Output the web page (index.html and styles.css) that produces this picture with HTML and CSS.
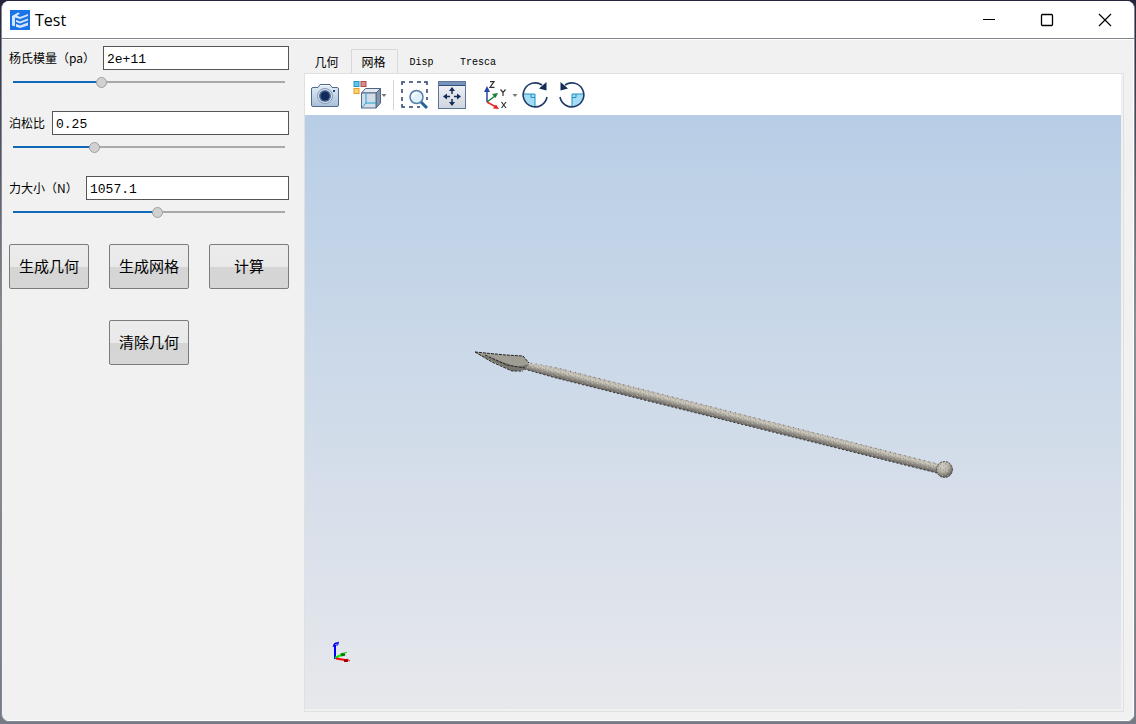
FILE: index.html
```html
<!DOCTYPE html>
<html lang="zh-CN">
<head>
<meta charset="utf-8">
<title>Test</title>
<link rel="stylesheet" href="styles.css">
</head>
<body>
<div class="window">
  <header class="titlebar">
    <svg class="app-icon" viewBox="0 0 20 20"><rect width="20" height="20" fill="#1a73e8"/><path d="M2 6l6-3.500 2 1-3 2 3 1.500 8-3v2l-8 3-5-1.500v2l5 2 8-3v2l-8 3-5-2v2l5 2 8-3v3l-8 2.500-8-2.500z" fill="#d5e5fb"/><path d="M5.500 8v9" stroke="#1a73e8"/></svg>
    <h1 class="title">Test</h1>
    <div class="window-controls">
      <button class="window-button" aria-label="最小化"><svg viewBox="0 0 14 14"><path d="M1 6.500h12" stroke="#000"/></svg></button>
      <button class="window-button" aria-label="最大化"><svg viewBox="0 0 14 14"><rect x="1.500" y="1.500" width="11" height="11" rx="1" fill="none" stroke="#000" stroke-width="1.300"/></svg></button>
      <button class="window-button" aria-label="关闭"><svg viewBox="0 0 14 14"><path d="M1 1l12 12M13 1L1 13" stroke="#000" stroke-width="1.200"/></svg></button>
    </div>
  </header>
  <main class="content">
    <form class="params">
      <div class="param">
        <div class="field"><label class="field-label label-modulus" for="modulus">杨氏模量（pa）</label><input class="field-input" id="modulus" type="text" value="2e+11"></div>
        <input class="slider" type="range" aria-label="杨氏模量" min="0" max="1000" value="318" style="--fill:32%">
      </div>
      <div class="param">
        <div class="field"><label class="field-label label-ratio" for="ratio">泊松比</label><input class="field-input" id="ratio" type="text" value="0.25"></div>
        <input class="slider" type="range" aria-label="泊松比" min="0" max="1000" value="291" style="--fill:30%">
      </div>
      <div class="param">
        <div class="field"><label class="field-label label-force" for="force">力大小（N）</label><input class="field-input" id="force" type="text" value="1057.1"></div>
        <input class="slider" type="range" aria-label="力大小" min="0" max="1000" value="533" style="--fill:53%">
      </div>
      <div class="actions">
        <button class="action" type="button">生成几何</button>
        <button class="action" type="button">生成网格</button>
        <button class="action" type="button">计算</button>
        <button class="action action-clear" type="button">清除几何</button>
      </div>
    </form>
    <section class="viewer">
      <div class="tabs" role="tablist">
        <button class="tab" role="tab">几何</button>
        <button class="tab tab-active" role="tab" aria-selected="true">网格</button>
        <button class="tab tab-latin" role="tab">Disp</button>
        <button class="tab tab-latin tab-tresca" role="tab">Tresca</button>
      </div>
      <div class="panel">
        <div class="toolbar">
          <button class="tool tool-camera" aria-label="截图"><svg class="icon" viewBox="0 0 28 28"><defs><linearGradient id="steel" x2="0" y2="1"><stop stop-color="#e4eef8"/><stop offset="1" stop-color="#a9bfd8"/></linearGradient></defs><path d="M2 6.500Q.5 6.500.5 8v16q0 1.500 1.500 1.500h24q1.500 0 1.500-1.500V8q0-1.500-1.500-1.500h-5l-2-3H9l-2 3z" fill="url(#steel)" stroke="#50698f"/><path d="M9.500 4.500h9" stroke="#f4f9fd"/><circle cx="14" cy="15" r="7.500" fill="#dbe6f2" stroke="#8299b5"/><circle cx="14" cy="15" r="6" fill="#557098"/><circle cx="14" cy="15" r="4.500" fill="#132b59"/><rect x="22" y="9" width="2" height="2" fill="#274a7c"/></svg></button>
          <button class="tool tool-view" aria-label="视图"><svg class="icon" viewBox="0 0 28 28"><rect x="1" y=".5" width="5" height="5" fill="#5fc4ee" stroke="#2495c7"/><rect x="8" y=".5" width="5" height="5" fill="#d98d8d" stroke="#a84c50"/><rect x="1" y="7.500" width="5" height="5" fill="#ffd36b" stroke="#e49c2c"/><path d="M8.500 12l4-4.500h15L23 12z" fill="#e3e9f0" stroke="#4d637e"/><path d="M23 12l4.500-4.500V22L23 27z" fill="#8396ad" stroke="#4d637e"/><rect x="8.500" y="12" width="14.500" height="15" fill="#d3dde9" stroke="#536b88"/><path d="M13 12v10h10M13 22l-4 4.500" fill="none" stroke="#1da3d4"/></svg><svg class="arrow" viewBox="0 0 6 6"><path d="M.5 2h5L3 5z" fill="#777"/></svg></button>
          <span class="separator"></span>
          <button class="tool tool-zoom" aria-label="框选缩放"><svg class="icon" viewBox="0 0 28 28"><path d="M1 4V1h3M8 1h4M16 1h4M23 1h3v3M26 8v4M26 16v3M1 8v4M1 16v4M1 23v3h3M8 26h4M16 26h3" fill="none" stroke="#2a3f68" stroke-width="1.500"/><path d="M20 21l6 6" stroke="#1e659f" stroke-width="3"/><circle cx="15.500" cy="16" r="6.500" fill="#dff1fb" stroke="#557da8" stroke-width="1.500"/><path d="M12 16q0-4 4-4" fill="none" stroke="#fff" stroke-width="1.500"/></svg></button>
          <button class="tool tool-fit" aria-label="适应窗口"><svg class="icon" viewBox="0 0 28 28"><rect x=".5" y=".5" width="27" height="27" fill="url(#fitface)" stroke="#5d7697"/><defs><linearGradient id="fitface" x2="0" y2="1"><stop stop-color="#f2f4f7"/><stop offset="1" stop-color="#cfd5df"/></linearGradient></defs><path d="M1 1h26v3H1z" fill="#7693bc"/><path d="M1 4.500h26" stroke="#324f7c"/><path d="M14 8v5M14 18v5M7 15.500h5M16 15.500h5" stroke="#142c58" stroke-width="1.500"/><path d="M14 6l3 4h-6zM14 25l3-4h-6zM5 15.500l4-3v6zM23 15.500l-4-3v6z" fill="#142c58"/></svg></button>
          <button class="tool tool-axes" aria-label="坐标轴方向"><svg class="icon" viewBox="0 0 28 28"><path d="M3 21V9" stroke="#2447a8" stroke-width="1.500"/><path d="M3 5l3 6H0z" fill="#2447a8"/><path d="M3 21l8-6" stroke="#168039" stroke-width="1.500"/><path d="M14 12l-2.500 5-3.500-4z" fill="#168039"/><path d="M3 21l9 5" stroke="#e62626" stroke-width="1.500"/><path d="M15 28l-6-.5 3-4z" fill="#e62626"/><path d="M6 .7h4L6 6.300h4.500M16.500 8.500l2.500 3 2.500-3M19 11.500v3.500M17.500 21l4.500 6M22 21l-4.500 6" fill="none" stroke="#333" stroke-width="1.200"/></svg><svg class="arrow" viewBox="0 0 6 6"><path d="M.5 2h5L3 5z" fill="#777"/></svg></button>
          <button class="tool tool-cw" aria-label="顺时针旋转"><svg class="icon" viewBox="0 0 28 28"><path d="M2 13h12v12.500A12 12 0 0 1 2 13z" fill="#a4dcf5"/><path d="M2 13h12v12M10 13v3.500h4" fill="none" stroke="#1c91c6"/><path d="M21 4A12 12 0 1 0 26 16" fill="none" stroke="#213b68" stroke-width="1.600"/><path d="M25.500 1v8.500l-7.500-2z" fill="#142c58"/></svg></button>
          <button class="tool tool-ccw" aria-label="逆时针旋转"><svg class="icon" viewBox="0 0 28 28"><path d="M26 13H14v12.500A12 12 0 0 0 26 13z" fill="#a4dcf5"/><path d="M26 13H14v12M18 13v3.500h-4" fill="none" stroke="#1c91c6"/><path d="M7 4A12 12 0 1 1 2 16" fill="none" stroke="#213b68" stroke-width="1.600"/><path d="M2.500 1v8.500l7.500-2z" fill="#142c58"/></svg></button>
        </div>
        <div class="viewport">
          <svg class="scene" viewBox="0 0 816 594" preserveAspectRatio="xMidYMid meet">
            <defs>
              <linearGradient id="shaft" gradientUnits="userSpaceOnUse" x1="431" y1="297" x2="428.500" y2="307"><stop stop-color="#b7b3aa"/><stop offset=".35" stop-color="#cbc7bc"/><stop offset=".65" stop-color="#9a968e"/><stop offset="1" stop-color="#65625e"/></linearGradient>
              <radialGradient id="ball" cx=".4" cy=".3" r=".7"><stop stop-color="#d5d1c6"/><stop offset=".55" stop-color="#b1ada3"/><stop offset="1" stop-color="#5f5d59"/></radialGradient>
              <pattern id="mesh" width="5" height="4" patternUnits="userSpaceOnUse"><path d="M0 1h1M3 3h1" stroke="#7c7972" stroke-width=".6"/><path d="M2 0h1" stroke="#dedace" stroke-width=".8"/></pattern>
            </defs>
            <path d="M219 247l34 6 381 96-2 9-381-95-32-9z" fill="url(#shaft)"/>
            <path d="M219 247l34 6 381 96-2 9-381-95-32-9z" fill="url(#mesh)"/>
            <path d="M221 247l32 6 380 96" fill="none" stroke="#55534f" stroke-width=".8" stroke-dasharray="1 4"/>
            <path d="M219 254l32 9 381 95" fill="none" stroke="#383734" stroke-dasharray="2 2"/>
            <path d="M170 237l31 3 17 1 6 7-5 7-12 1-20-9z" fill="#a09d95"/>
            <path d="M171 238l41 14 12-3-4 6-12 1z" fill="#77756f"/>
            <path d="M170 237l31 3 17 1 6 7M170 237l17 10 20 9h11M180 240l22 10 18 3" fill="none" stroke="#252523" stroke-dasharray="3 1"/>
            <circle cx="639.500" cy="354.500" r="8" fill="url(#ball)"/><circle cx="639.500" cy="354.500" r="8" fill="url(#mesh)" stroke="#4a4946" stroke-dasharray="2 1"/>
            <path d="M30 544v-14" stroke="#00f" stroke-width="2"/><path d="M28 532l2-4 4 1M29 529l5-2M28 530h5" fill="none" stroke="#00e"/>
            <path d="M30 543l8-4" stroke="#00f000" stroke-width="2"/><path d="M36 540l4-1" stroke="#006d00" stroke-width="3"/><path d="M38 539l4-2" stroke="#00e000"/>
            <path d="M31 543.500l12 2" stroke="#f00" stroke-width="2"/><path d="M39 545.500h4" stroke="#900" stroke-width="3"/><path d="M42 544l3 2" stroke="#f00"/>
          </svg>
        </div>
      </div>
    </section>
  </main>
</div>
</body>
</html>
```
FILE: styles.css
```css
* { box-sizing: border-box; }

body {
  margin: 0;
  min-height: 100vh;
  display: flex;
  padding: 1px 1px 2px;
  background: linear-gradient(#24243d, #8c8e94 45%, #747b86);
  color: #000;
  font-family: "Noto Sans CJK SC", sans-serif;
}

button, input { font: inherit; color: inherit; }

.window {
  flex: 1;
  display: flex;
  flex-direction: column;
  border: 1px solid #858a90;
  border-top: 0;
  border-radius: 8px;
  background: #f1f1f1;
  overflow: hidden;
}

.titlebar {
  height: 38px;
  display: flex;
  align-items: center;
  padding-left: 8px;
  background: #fff;
  border-bottom: 1px solid #80858c;
}
.app-icon { width: 20px; height: 20px; }
.title {
  margin: 0 0 0 5px;
  font: 400 16px/20px "Open Sans", "Noto Sans", sans-serif;
}
.window-controls { display: flex; margin-left: auto; }
.window-button {
  width: 58px;
  height: 36px;
  padding: 0;
  border: 0;
  background: none;
}
.window-button svg { width: 14px; height: 14px; display: block; margin: auto; }

.content {
  flex: 1;
  display: flex;
  border: solid #fff;
  border-width: 1px 1px 1px 0;
}

.params {
  width: 302px;
  flex: none;
  padding: 6px 15px 0 7px;
}
.param { height: 65px; }
.field { display: flex; height: 25px; }
.field-label {
  flex: none;
  font-size: 12px;
  line-height: 24px;
  white-space: nowrap;
}
.label-modulus { width: 94px; }
.label-ratio { width: 43px; }
.label-force { width: 77px; }
.field-input {
  flex: 1;
  min-width: 0;
  height: 24px;
  padding: 2px 3px 0;
  border: 1px solid #555;
  border-radius: 0;
  background: #fff;
  font-family: "Liberation Mono", monospace;
  font-size: 13px;
}

.slider {
  appearance: none;
  display: block;
  width: calc(100% - 8px);
  height: 12px;
  margin: 5px 4px 0;
  background: linear-gradient(to right, #0f68b8 var(--fill), #a9a9a9 var(--fill)) center / 100% 2px no-repeat;
}
.slider::-webkit-slider-thumb {
  appearance: none;
  width: 11px;
  height: 11px;
  border: 1px solid #a0a0a0;
  border-radius: 50%;
  background: #d1d1d1;
}

.actions {
  display: grid;
  grid-template-columns: repeat(3, 1fr);
  gap: 31px 20px;
  padding-top: 3px;
}
.action {
  height: 45px;
  padding: 0 0 2px;
  border: 1px solid #7c7c7c;
  border-radius: 2px;
  background: linear-gradient(#ececec, #e9e9e9 50%, #d5d5d5 51%, #d6d6d6) border-box;
  font-size: 15px;
}
.action-clear { grid-column: 2; }

.viewer {
  flex: 1;
  min-width: 0;
  display: flex;
  flex-direction: column;
  padding: 9px 9px 8px 0;
}
.tabs { display: flex; height: 24px; }
.tab {
  width: 47px;
  padding: 0 2px 0 0;
  border: 1px solid transparent;
  border-bottom: 0;
  background: none;
  font-size: 12px;
}
.tab-active { border-color: #d9d9d9; background: #f1f1f1; }
.tab-latin {
  width: 49px;
  padding-top: 2px;
  font-family: "Liberation Mono", monospace;
  font-size: 10px;
}
.tab-tresca { width: 64px; }

.panel {
  flex: 1;
  display: flex;
  flex-direction: column;
  border: 1px solid #e0e0e0;
  padding: 0 2px 2px 0;
}
.toolbar {
  flex: none;
  display: flex;
  align-items: center;
  height: 41px;
  padding-left: 6px;
  background: #fff;
}
.tool {
  display: flex;
  align-items: center;
  padding: 0;
  border: 0;
  background: none;
}
.icon { width: 28px; height: 28px; flex: none; }
.arrow { width: 6px; height: 6px; }
.tool-view { margin-left: 14px; }
.separator { width: 1px; height: 30px; margin-left: 6px; background: #d4d4d4; }
.tool-zoom { margin-left: 7px; }
.tool-fit { margin-left: 9px; }
.tool-axes { margin-left: 18px; }
.tool-cw { margin-left: 3px; }
.tool-ccw { margin-left: 9px; }

.viewport {
  flex: 1;
  min-height: 0;
  display: flex;
  background: linear-gradient(#b8cee6, #e7e8ec);
}
.scene { flex: 1; min-width: 0; width: 100%; }
```
